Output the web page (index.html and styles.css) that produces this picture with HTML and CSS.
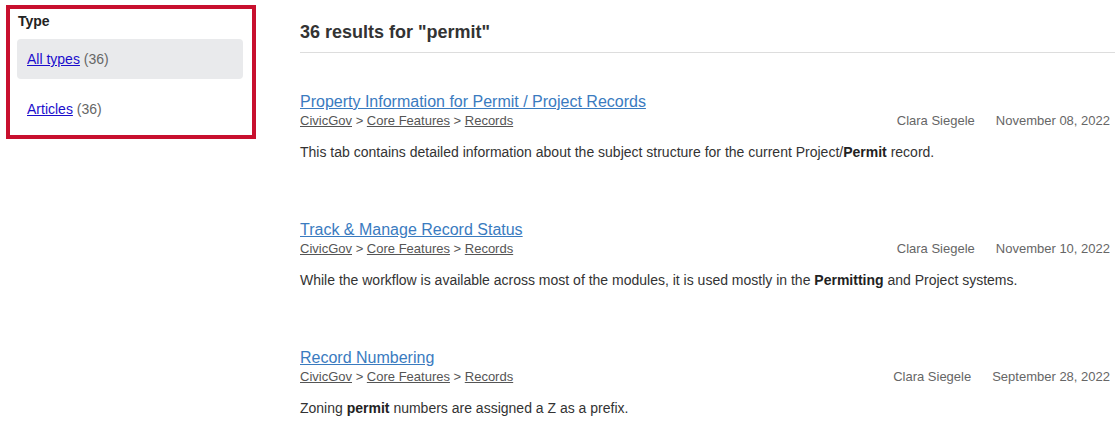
FILE: index.html
```html
<!DOCTYPE html>
<html lang="en">
<head>
<meta charset="utf-8">
<title>Search results</title>
<link rel="stylesheet" href="styles.css">
</head>
<body>
<div class="page">
  <aside class="filters">
    <div class="filter-title">Type</div>
    <ul class="filter-list">
      <li class="filter-item active"><span><a href="#">All types</a> <span class="count">(36)</span></span></li>
      <li class="filter-item"><span><a href="#">Articles</a> <span class="count">(36)</span></span></li>
    </ul>
  </aside>
  <main class="results">
    <h1 class="results-heading">36 results for "permit"</h1>
    <ul class="result-list">
      <li class="result">
        <a class="result-title" href="#">Property Information for Permit / Project Records</a>
        <div class="result-meta">
          <div class="crumbs"><a href="#">CivicGov</a> &gt; <a href="#">Core Features</a> &gt; <a href="#">Records</a></div>
          <div class="info"><span>Clara Siegele</span><span>November 08, 2022</span></div>
        </div>
        <p class="result-desc">This tab contains detailed information about the subject structure for the current Project/<b>Permit</b> record.</p>
      </li>
      <li class="result">
        <a class="result-title" href="#">Track &amp; Manage Record Status</a>
        <div class="result-meta">
          <div class="crumbs"><a href="#">CivicGov</a> &gt; <a href="#">Core Features</a> &gt; <a href="#">Records</a></div>
          <div class="info"><span>Clara Siegele</span><span>November 10, 2022</span></div>
        </div>
        <p class="result-desc">While the workflow is available across most of the modules, it is used mostly in the <b>Permitting</b> and Project systems.</p>
      </li>
      <li class="result">
        <a class="result-title" href="#">Record Numbering</a>
        <div class="result-meta">
          <div class="crumbs"><a href="#">CivicGov</a> &gt; <a href="#">Core Features</a> &gt; <a href="#">Records</a></div>
          <div class="info"><span>Clara Siegele</span><span>September 28, 2022</span></div>
        </div>
        <p class="result-desc">Zoning <b>permit</b> numbers are assigned a Z as a prefix.</p>
      </li>
    </ul>
  </main>
</div>
</body>
</html>
```

FILE: styles.css
```css
* { box-sizing: border-box; }
html, body { margin: 0; padding: 0; background: #fff; }
body {
  font-family: "Liberation Sans", Arial, sans-serif;
  color: #333;
  font-size: 13px;
}
.page {
  display: flex;
  align-items: flex-start;
  padding: 5px 0 0 6px;
}
.filters {
  width: 250px;
  flex: none;
  border: 4px solid #c8102e;
  padding: 3px 9px 6px 7px;
}
.filter-title {
  font-size: 14px;
  font-weight: bold;
  line-height: 18px;
  padding-left: 1px;
  color: #222;
}
.filter-list {
  list-style: none;
  margin: 9px 0 0;
  padding: 0;
  display: flex;
  flex-direction: column;
  gap: 10px;
}
.filter-item {
  height: 40px;
  display: flex;
  align-items: center;
  padding-left: 10px;
  font-size: 14px;
  border-radius: 4px;
}
.filter-item.active { background: #e9eaec; }
.filter-item a { color: #1a0dcc; text-decoration: underline; }
.filter-item .count { color: #666; }
.results {
  flex: 1;
  margin-left: 44px;
  padding-top: 15px;
}
.results-heading {
  margin: 0;
  font-size: 18px;
  line-height: 24px;
  font-weight: bold;
  color: #333;
  padding-bottom: 8px;
  border-bottom: 1px solid #ddd;
}
.result-list {
  list-style: none;
  margin: 39px 0 0;
  padding: 0 5px 0 0;
  display: flex;
  flex-direction: column;
  gap: 58px;
}
.result-title {
  display: block;
  width: max-content;
  font-size: 16px;
  line-height: 20px;
  color: #3a7bbf;
  text-decoration: underline;
}
.result-meta {
  display: flex;
  justify-content: space-between;
  line-height: 18px;
  font-size: 13px;
}
.crumbs { color: #555; }
.crumbs a { color: #555; text-decoration: underline; }
.info { display: flex; gap: 21px; color: #666; }
.result-desc {
  margin: 12px 0 0;
  line-height: 20px;
  font-size: 14px;
  color: #333;
}
.result-desc b { color: #222; }
```
